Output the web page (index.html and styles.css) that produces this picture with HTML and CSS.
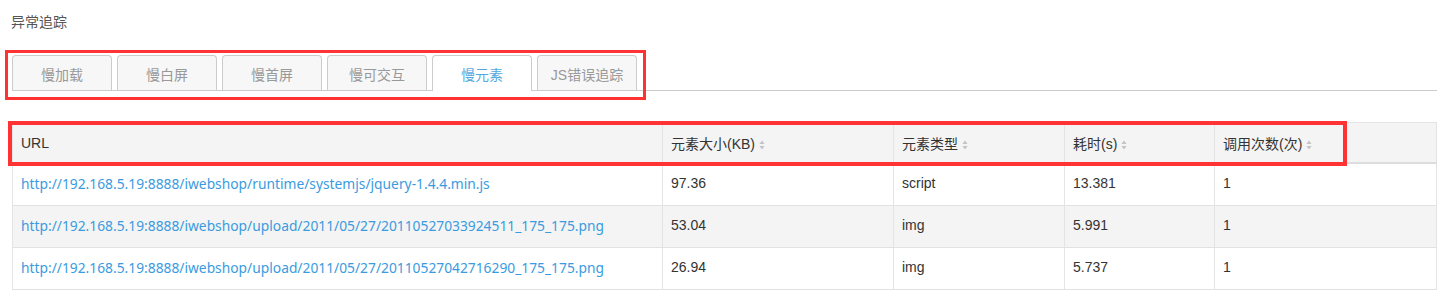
FILE: index.html
```html
<!DOCTYPE html>
<html lang="zh-CN">
<head>
<meta charset="utf-8">
<title>异常追踪</title>
<link rel="stylesheet" href="styles.css">
</head>
<body>
<div class="page">
  <div class="title">异常追踪</div>
  <div class="tabs">
    <div class="tab">慢加载</div>
    <div class="tab">慢白屏</div>
    <div class="tab">慢首屏</div>
    <div class="tab">慢可交互</div>
    <div class="tab active">慢元素</div>
    <div class="tab">JS错误追踪</div>
  </div>
  <table class="grid">
    <colgroup>
      <col class="c-url"><col class="c-size"><col class="c-type"><col class="c-time"><col class="c-count">
    </colgroup>
    <thead>
      <tr>
        <th>URL</th>
        <th>元素大小(KB)<svg class="sort" viewBox="0 0 6 10" width="6" height="10"><path d="M3 0.5L5.6 4H0.4Z"/><path d="M3 9.5L5.6 6H0.4Z"/></svg></th>
        <th>元素类型<svg class="sort" viewBox="0 0 6 10" width="6" height="10"><path d="M3 0.5L5.6 4H0.4Z"/><path d="M3 9.5L5.6 6H0.4Z"/></svg></th>
        <th>耗时(s)<svg class="sort" viewBox="0 0 6 10" width="6" height="10"><path d="M3 0.5L5.6 4H0.4Z"/><path d="M3 9.5L5.6 6H0.4Z"/></svg></th>
        <th>调用次数(次)<svg class="sort" viewBox="0 0 6 10" width="6" height="10"><path d="M3 0.5L5.6 4H0.4Z"/><path d="M3 9.5L5.6 6H0.4Z"/></svg></th>
      </tr>
    </thead>
    <tbody>
      <tr>
        <td><a class="link" href="#">http://192.168.5.19:8888/iwebshop/runtime/systemjs/jquery-1.4.4.min.js</a></td>
        <td>97.36</td><td>script</td><td>13.381</td><td>1</td>
      </tr>
      <tr class="alt">
        <td><a class="link" href="#">http://192.168.5.19:8888/iwebshop/upload/2011/05/27/20110527033924511_175_175.png</a></td>
        <td>53.04</td><td>img</td><td>5.991</td><td>1</td>
      </tr>
      <tr>
        <td><a class="link" href="#">http://192.168.5.19:8888/iwebshop/upload/2011/05/27/20110527042716290_175_175.png</a></td>
        <td>26.94</td><td>img</td><td>5.737</td><td>1</td>
      </tr>
    </tbody>
  </table>
  <div class="mark mark-tabs"></div>
  <div class="mark mark-head"></div>
</div>
</body>
</html>
```

FILE: styles.css
```css
html, body {
  margin: 0;
  padding: 0;
  background: #fff;
}
.page {
  position: relative;
  font-family: "Liberation Sans", Arial, "Noto Sans CJK SC", sans-serif;
  font-size: 14px;
  color: #333;
  padding: 14px 9px 0 12px;
}
.title {
  font-size: 14px;
  line-height: 16px;
  color: #555;
  margin-left: -1px;
}
.tabs {
  display: flex;
  margin-top: 25px;
  border-bottom: 1px solid #ccc;
  height: 35px;
}
.tab {
  box-sizing: border-box;
  width: 100px;
  height: 35px;
  margin-right: 5px;
  border: 1px solid #ccc;
  border-bottom: none;
  border-radius: 4px 4px 0 0;
  background: #f7f7f7;
  color: #999;
  font-size: 14px;
  display: flex;
  align-items: center;
  justify-content: center;
  padding-top: 2px;
}
.tab.active {
  background: #fff;
  color: #55a9df;
  height: 36px;
  padding-bottom: 1px;
}
.grid {
  margin-top: 31px;
  width: 100%;
  table-layout: fixed;
  border-collapse: collapse;
  border: 1px solid #e4e4e4;
}
.c-url { width: 650px; }
.c-size { width: 231px; }
.c-type { width: 171px; }
.c-time { width: 150px; }
.c-count { width: auto; }
.grid th, .grid td {
  text-align: left;
  font-weight: normal;
  padding: 0 8px;
  border-left: 1px solid #e4e4e4;
  white-space: nowrap;
  overflow: hidden;
}
.grid th {
  height: 39px;
  background: #f4f4f4;
  color: #333;
  font-size: 14px;
  border-bottom: 2px solid #ddd;
}
.grid td {
  height: 42px;
  font-size: 14px;
  color: #333;
  border-bottom: 1px solid #e2e2e2;
  padding-bottom: 2px;
  box-sizing: border-box;
}
.grid tr.alt td {
  background: #f4f4f4;
}
.link {
  font-family: "Noto Sans", "Liberation Sans", sans-serif;
  font-size: 13.8px;
  color: #3a9be0;
  text-decoration: none;
}
.sort {
  margin-left: 4px;
  vertical-align: -1px;
  fill: #c4c4c4;
}
.mark {
  position: absolute;
  border: 3px solid #f33;
  box-sizing: border-box;
  pointer-events: none;
}
.mark-tabs {
  left: 5px;
  top: 50px;
  width: 641px;
  height: 50px;
}
.mark-head {
  left: 8px;
  top: 121px;
  width: 1339px;
  height: 45px;
  border-width: 4px;
}
```
